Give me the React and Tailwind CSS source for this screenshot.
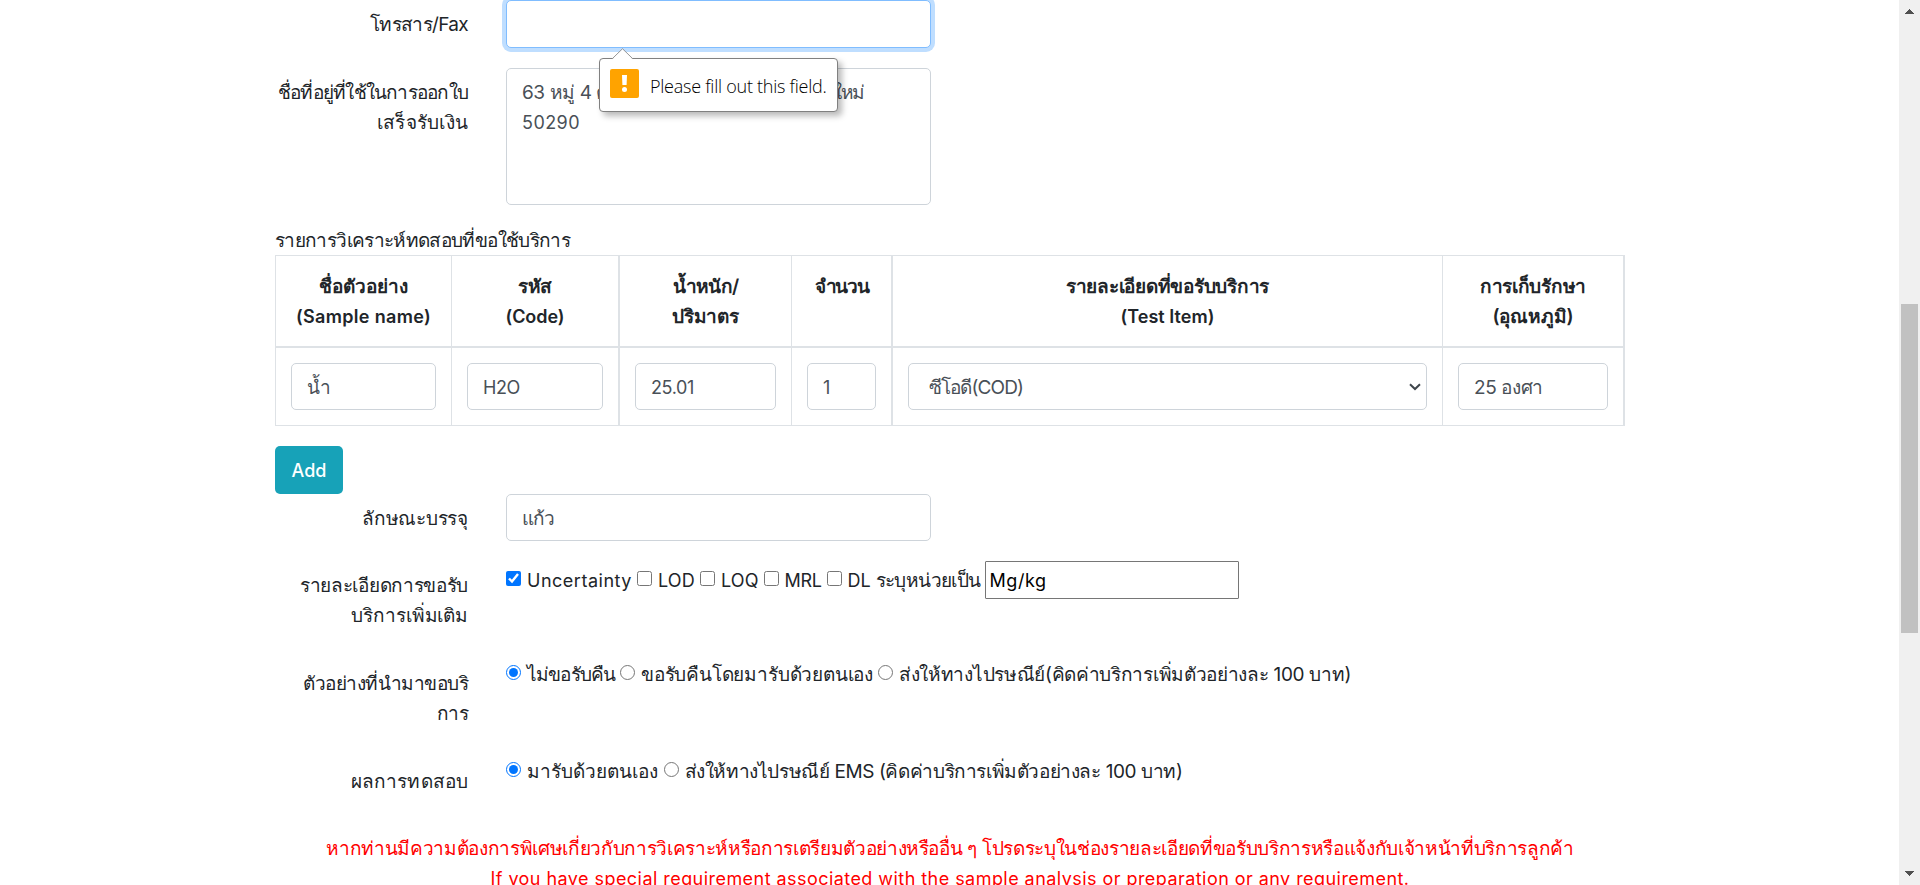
import { useLayoutEffect, useRef, useState } from "react";

const THAI = /[\u0E00-\u0E7F]/;

/* Single line of text whose letter spacing is computed so that it fills a given width. */
function Txt({ w, className = "", children }) {
  const ref = useRef(null);
  const [spacing, setSpacing] = useState(0);
  useLayoutEffect(() => {
    const el = ref.current;
    el.style.letterSpacing = "0px";
    const base = el.getBoundingClientRect().width;
    el.style.letterSpacing = "1px";
    const step = el.getBoundingClientRect().width - base;
    const value = step ? (w - base) / step : 0;
    el.style.letterSpacing = value + "px";
    setSpacing(value);
  }, [w, children]);
  const script = THAI.test(children) ? "text-[19px] leading-[31px] -mb-px " : "leading-[32px] -mb-[2px] ";
  return (
    <span ref={ref} className={"inline-block whitespace-nowrap " + script + className} style={{ letterSpacing: spacing + "px" }}>
      {children}
    </span>
  );
}

function Label({ lines }) {
  return (
    <div className="flex w-[193px] shrink-0 flex-col items-end pt-[9px]">
      {lines.map(([text, w]) => (
        <Txt key={text} w={w}>{text}</Txt>
      ))}
    </div>
  );
}

function Field({ className = "", children }) {
  return (
    <div className={"flex h-[47px] items-center rounded-[5px] border border-[#ced4da] bg-white px-[15px] text-[#495057] " + className}>
      {children}
    </div>
  );
}

const columns = [
  { head: [["ชื่อตัวอย่าง", 89], ["(Sample name)", 135]], value: ["น้ำ", 20.5], edge: "border-r" },
  { head: [["รหัส", 34.5], ["(Code)", 59]], value: ["H2O", 37], edge: "border-r-2" },
  { head: [["น้ำหนัก/", 66], ["ปริมาตร", 66]], value: ["25.01", 43], edge: "border-r" },
  { head: [["จำนวน", 54]], value: ["1", 7], edge: "border-r-2" },
  { head: [["รายละเอียดที่ขอรับบริการ", 203], ["(Test Item)", 94]], value: ["ซีโอดี(COD)", 94], edge: "border-r", select: true },
  { head: [["การเก็บรักษา", 106], ["(อุณหภูมิ)", 81]], value: ["25 องศา", 69], edge: "border-r-2" },
];

const grid = "grid grid-cols-[176px_168px_172px_101px_550px_182px]";

function Choice({ type, name, checked, w, className = "mr-[5px]", children }) {
  return (
    <label className={"flex items-center " + className}>
      <input type={type} name={name} defaultChecked={checked} className="mr-[6px] -mt-[3px] size-[15px] shrink-0" />
      <Txt w={w}>{children}</Txt>
    </label>
  );
}

function Tooltip() {
  return (
    <div className="absolute left-[93px] top-[58px] flex h-[54px] w-[239px] items-center rounded-[4px] border border-[#808080] bg-white pl-[10px] shadow-[4px_4px_6px_rgba(0,0,0,0.28)]">
      <svg className="absolute left-[12px] top-[-11px]" width="22" height="12" viewBox="0 0 22 12">
        <path d="M0 11.5 L10.5 1 L21 11.5 Z" fill="#fff" />
        <path d="M0.5 10.5 L10.5 0.7 L20.5 10.5" fill="none" stroke="#969696" strokeWidth="1" />
      </svg>
      <svg className="-mt-[4px] mr-[11px] shrink-0" width="29" height="29" viewBox="0 0 29 29">
        <rect width="29" height="29" rx="2" fill="#ffa300" />
        <path d="M12 6 H17 L16.6 16 H12.4 Z" fill="#fff" />
        <circle cx="14.5" cy="20.5" r="2.5" fill="#fff" />
      </svg>
      <Txt w={176.5} className="font-['Open_Sans',sans-serif] font-light text-black">Please fill out this field.</Txt>
    </div>
  );
}

export default function App() {
  return (
    <div className="flex h-[885px] w-[1920px] overflow-hidden bg-white font-['Inter','Noto_Sans',sans-serif] text-[18px] leading-[30px] text-[#212529]">
      <main className="w-[1899px] shrink-0 pl-[275px]">
        <div className="w-[1350px]">
          <div className="flex h-[68px] gap-[38px]">
            <Label lines={[["โทรสาร/Fax", 98]]} />
            <div className="relative">
              <div className="h-[48px] w-[425px] rounded-[5px] border border-[#80bdff] bg-white shadow-[0_0_0_4px_#bfdeff]" />
              <Tooltip />
            </div>
          </div>

          <div className="flex h-[157px] gap-[38px]">
            <Label lines={[["ชื่อที่อยู่ที่ใช้ในการออกใบ", 190], ["เสร็จรับเงิน", 91]]} />
            <div className="h-[137px] w-[425px] rounded-[5px] border border-[#ced4da] px-[15px] pt-[8px] text-[#495057]">
              <div className="flex h-[30px] justify-between pr-[51px]">
                <Txt w={86}>63 หมู่ 4 ต</Txt>
                <Txt w={31}>ใหม่</Txt>
              </div>
              <Txt w={58}>50290</Txt>
            </div>
          </div>

          <div className="flex h-[30px]">
            <Txt w={295}>รายการวิเคราะห์ทดสอบที่ขอใช้บริการ</Txt>
          </div>

          <div className="h-[171px] border-y border-l border-[#dee2e6]">
            <div className={grid}>
              {columns.map((c) => (
                <div key={c.head[0][0]} className={"flex h-[92px] flex-col items-center border-b-2 border-[#dee2e6] pt-[15px] font-semibold " + c.edge}>
                  {c.head.map(([text, w]) => (
                    <Txt key={text} w={w}>{text}</Txt>
                  ))}
                </div>
              ))}
            </div>
            <div className={grid}>
              {columns.map((c) => (
                <div key={c.head[0][0]} className={"h-[77px] border-[#dee2e6] p-[15px] " + c.edge}>
                  <Field className={c.select ? "justify-between pl-[20px] pr-[5px]" : ""}>
                    <Txt w={c.value[1]}>{c.value[0]}</Txt>
                    {c.select && (
                      <svg width="12" height="8" viewBox="0 0 12 8">
                        <path d="M1 1.2 L6 6 L11 1.2" fill="none" stroke="#3f464c" strokeWidth="2" />
                      </svg>
                    )}
                  </Field>
                </div>
              ))}
            </div>
          </div>

          <button className="mt-[20px] flex h-[48px] w-[68px] items-center justify-center rounded-[5px] bg-[#17a2b8] font-medium text-white">
            <Txt w={35}>Add</Txt>
          </button>

          <div className="flex h-[67px] gap-[38px]">
            <Label lines={[["ลักษณะบรรจุ", 106]]} />
            <Field className="w-[425px]">
              <Txt w={32.5}>แก้ว</Txt>
            </Field>
          </div>

          <div className="flex h-[98px] gap-[38px]">
            <Label lines={[["รายละเอียดการขอรับ", 168], ["บริการเพิ่มเติม", 116.5]]} />
            <div className="flex h-[38px] items-center">
              <Choice type="checkbox" checked w={105}>Uncertainty</Choice>
              <Choice type="checkbox" w={37}>LOD</Choice>
              <Choice type="checkbox" w={37.5}>LOQ</Choice>
              <Choice type="checkbox" w={37}>MRL</Choice>
              <Choice type="checkbox" w={23}>DL</Choice>
              <Txt w={105}>ระบุหน่วยเป็น</Txt>
              <div className="ml-[4px] flex h-[38px] w-[254px] items-center rounded-[1px] border border-[#767676] pl-[4px] text-black">
                <Txt w={57}>Mg/kg</Txt>
              </div>
            </div>
          </div>

          <div className="flex h-[98px] gap-[38px]">
            <Label lines={[["ตัวอย่างที่นำมาขอบริ", 165], ["การ", 31]]} />
            <div className="flex h-[30px] items-center">
              <Choice type="radio" name="sample" checked w={88}>ไม่ขอรับคืน</Choice>
              <Choice type="radio" name="sample" w={232}>ขอรับคืนโดยมารับด้วยตนเอง</Choice>
              <Choice type="radio" name="sample" w={452}>ส่งให้ทางไปรษณีย์(คิดค่าบริการเพิ่มตัวอย่างละ 100 บาท)</Choice>
            </div>
          </div>

          <div className="flex h-[76px] gap-[38px]">
            <Label lines={[["ผลการทดสอบ", 117]]} />
            <div className="-mt-px flex h-[30px] items-center">
              <Choice type="radio" name="result" checked w={131.5}>มารับด้วยตนเอง</Choice>
              <Choice type="radio" name="result" w={498}>ส่งให้ทางไปรษณีย์ EMS (คิดค่าบริการเพิ่มตัวอย่างละ 100 บาท)</Choice>
            </div>
          </div>

          <div className="flex flex-col items-center text-[#ff0000]">
            <Txt w={1247}>
              หากท่านมีความต้องการพิเศษเกี่ยวกับการวิเคราะห์หรือการเตรียมตัวอย่างหรืออื่น ๆ โปรดระบุในช่องรายละเอียดที่ขอรับบริการหรือแจ้งกับเจ้าหน้าที่บริการลูกค้า
            </Txt>
            <Txt w={919}>
              If you have special requirement associated with the sample analysis or preparation or any requirement.
            </Txt>
          </div>
        </div>
      </main>

      <aside className="flex w-[21px] shrink-0 flex-col items-center bg-[#f0f0f0] pt-[9px]">
        <svg width="9" height="5" viewBox="0 0 9 5" shapeRendering="crispEdges">
          <path d="M4.5 0 L9 5 H0 Z" fill="#505050" />
        </svg>
        <div className="mt-[290px] h-[329px] w-[17px] bg-[#c1c1c1]" />
        <svg className="mt-[238px]" width="9" height="5" viewBox="0 0 9 5" shapeRendering="crispEdges">
          <path d="M0 0 H9 L4.5 5 Z" fill="#505050" />
        </svg>
      </aside>
    </div>
  );
}
